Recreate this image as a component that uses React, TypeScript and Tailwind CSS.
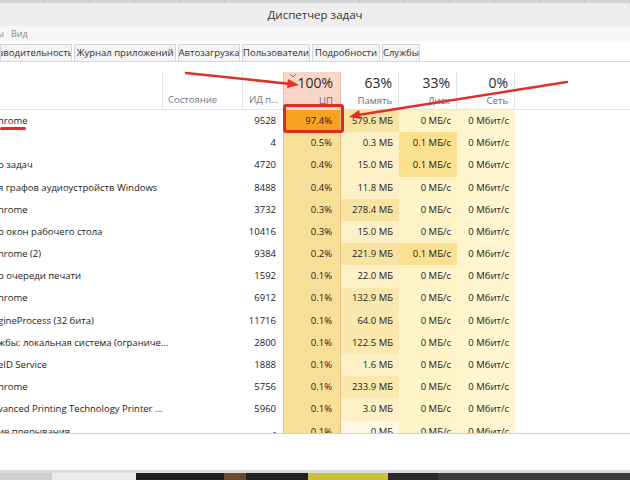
import React from "react";

type Row = {
  name: string;
  pid: string;
  cpu: string;
  mem: string;
  disk: string;
  memTone: "hi" | "mid" | "lo" | "none";
  diskHi?: boolean;
};

const rows: Row[] = [
  { name: "hrome", pid: "9528", cpu: "97.4%", mem: "579.6 МБ", disk: "0 МБ/с", memTone: "hi" },
  { name: "", pid: "4", cpu: "0.5%", mem: "0.3 МБ", disk: "0.1 МБ/с", memTone: "lo", diskHi: true },
  { name: "р задач", pid: "4720", cpu: "0.4%", mem: "15.0 МБ", disk: "0.1 МБ/с", memTone: "lo", diskHi: true },
  { name: "я графов аудиоустройств Windows", pid: "8488", cpu: "0.4%", mem: "11.8 МБ", disk: "0 МБ/с", memTone: "lo" },
  { name: "hrome", pid: "3732", cpu: "0.3%", mem: "278.4 МБ", disk: "0 МБ/с", memTone: "hi" },
  { name: "р окон рабочего стола", pid: "10416", cpu: "0.3%", mem: "15.0 МБ", disk: "0 МБ/с", memTone: "lo" },
  { name: "hrome (2)", pid: "9384", cpu: "0.2%", mem: "221.9 МБ", disk: "0.1 МБ/с", memTone: "hi", diskHi: true },
  { name: "р очереди печати", pid: "1592", cpu: "0.1%", mem: "22.0 МБ", disk: "0 МБ/с", memTone: "lo" },
  { name: "hrome", pid: "6912", cpu: "0.1%", mem: "132.9 МБ", disk: "0 МБ/с", memTone: "mid" },
  { name: "gineProcess (32 бита)", pid: "11716", cpu: "0.1%", mem: "64.0 МБ", disk: "0 МБ/с", memTone: "mid" },
  { name: "жбы: локальная система (ограниче...", pid: "2800", cpu: "0.1%", mem: "122.5 МБ", disk: "0 МБ/с", memTone: "mid" },
  { name: "eID Service", pid: "1888", cpu: "0.1%", mem: "1.6 МБ", disk: "0 МБ/с", memTone: "lo" },
  { name: "hrome", pid: "5756", cpu: "0.1%", mem: "233.9 МБ", disk: "0 МБ/с", memTone: "mid" },
  { name: "vanced Printing Technology Printer ...", pid: "5960", cpu: "0.1%", mem: "3.0 МБ", disk: "0 МБ/с", memTone: "lo" },
  { name: "ие прерывания", pid: "-", cpu: "0.1%", mem: "0 МБ", disk: "0 МБ/с", memTone: "none" },
];

const tabs = [
  { label: "зводительность", w: "w-[72px]" },
  { label: "Журнал приложений", w: "w-[102px]" },
  { label: "Автозагрузка", w: "w-[62px]" },
  { label: "Пользователи", w: "w-[68px]" },
  { label: "Подробности", w: "w-[68px]" },
  { label: "Службы", w: "w-[38px]" },
];

const memBg = {
  hi: "bg-[#f9e3a0]",
  mid: "bg-[#fae8ac]",
  lo: "bg-[#fdf0c6]",
  none: "bg-[#fff8e2]",
};

function HeadCol({ pct, label, active }: { pct: string; label: string; active?: boolean }) {
  return (
    <div
      className={
        active
          ? "relative w-[58px] h-full flex flex-col items-end pr-[7px] bg-[#fad6c6] border-x border-[#f0b9a3]"
          : "w-[58px] h-full flex flex-col items-end pr-[6px] border-r border-[#e6e6e6]"
      }
    >
      {active && (
        <svg className="absolute left-[5px] top-[1px]" width="8" height="5" viewBox="0 0 8 5">
          <path d="M1 1 L4 4 L7 1" fill="none" stroke="#777" strokeWidth="1" />
        </svg>
      )}
      <div className="text-[14px] leading-[18px] mt-[2px] text-[#2a2a2a]">{pct}</div>
      <div className="text-[9.5px] leading-[14px] mt-[2px] text-[#5b6f8c]">{label}</div>
    </div>
  );
}

export default function App() {
  return (
    <div
      className="relative w-[630px] h-[480px] overflow-hidden bg-white text-[#222]"
      style={{ fontFamily: '"Open Sans", "Noto Sans", sans-serif' }}
    >
      {/* top strip */}
      <div className="h-[3px] bg-[#d4d4d4] flex">
        {Array.from({ length: 14 }).map((_, i) => (
          <div key={i} className="flex-1 border-r border-[#c4c4c4]" />
        ))}
      </div>

      {/* title bar */}
      <div className="h-[23px] bg-[#eeeeee] flex items-center justify-center text-[11.5px] text-[#333]">
        Диспетчер задач
      </div>

      {/* menu */}
      <div className="h-[16px] bg-[#f7f7f7] flex items-center gap-[7px] text-[9px] text-[#8a8a8a] -ml-[3px]">
        <span>ы</span>
        <span>Вид</span>
      </div>

      {/* tabs */}
      <div className="h-[20px] flex items-end gap-[2px] border-b border-[#d9d9d9] bg-white pt-[2px]">
        {tabs.map((t) => (
          <div
            key={t.label}
            className={`${t.w} h-full flex items-center justify-center border border-b-0 border-[#d3d3d3] bg-[#f4f4f4] text-[9.5px] text-[#333] whitespace-nowrap overflow-hidden`}
          >
            {t.label}
          </div>
        ))}
      </div>

      {/* column header */}
      <div className="h-[48px] pt-[10px] flex border-b border-[#e3e3e3]">
        <div className="w-[163px] h-full border-r border-[#e6e6e6]" />
        <div className="w-[80px] h-full border-r border-[#e6e6e6] flex items-end pb-[2px] pl-[5px] text-[9.5px] text-[#6b7a8f]">
          Состояние
        </div>
        <div className="w-[40px] h-full flex items-end pb-[2px] pl-[6px] text-[9.5px] text-[#6b7a8f]">
          ИД п...
        </div>
        <HeadCol pct="100%" label="ЦП" active />
        <HeadCol pct="63%" label="Память" />
        <HeadCol pct="33%" label="Диск" />
        <HeadCol pct="0%" label="Сеть" />
      </div>

      {/* rows */}
      <div className="h-[324px] overflow-hidden border-b border-[#cfcfcf] text-[9.5px]">
        {rows.map((r, i) => (
          <div key={i} className="h-[22.2px] flex items-center">
            <div className="w-[243px] h-full flex items-center -ml-[2px] whitespace-nowrap overflow-hidden">
              {r.name}
            </div>
            <div className="w-[42px] h-full flex items-center justify-end pr-[7px]">{r.pid}</div>
            <div
              className={`w-[58px] h-full flex items-center justify-end pr-[8px] border-x border-[#e8bf80] ${
                i === 0 ? "bg-[#f5a321]" : "bg-[#f8df98]"
              }`}
            >
              {r.cpu}
            </div>
            <div className={`w-[58px] h-full flex items-center justify-end pr-[6px] ${memBg[r.memTone]}`}>
              {r.mem}
            </div>
            <div
              className={`w-[58px] h-full flex items-center justify-end pr-[6px] ${
                r.diskHi ? "bg-[#fbe08f]" : "bg-[#fff3c8]"
              }`}
            >
              {r.disk}
            </div>
            <div className="w-[58px] h-full flex items-center justify-end pr-[6px] bg-[#fff5cf]">
              0 Мбит/с
            </div>
          </div>
        ))}
      </div>

      {/* empty area */}
      <div className="h-[36px] bg-white" />

      {/* bottom edge of window and the picture below */}
      <div className="h-[3px] bg-[#dcdcdc]" />
      <div className="h-[7px] flex">
        <div className="w-[52px] bg-[#cfcfcf]" />
        <div className="w-[84px] bg-[#ececec]" />
        <div className="w-[88px] bg-[#1e1e1e]" />
        <div className="w-[22px] bg-[#6b4b2e]" />
        <div className="w-[62px] bg-[#222]" />
        <div className="w-[80px] bg-[#c9c23a]" />
        <div className="w-[50px] bg-[#2a2a2a]" />
        <div className="flex-1 bg-[#3a3a3a]" />
      </div>

      {/* annotations */}
      <div className="absolute left-0 top-[127px] w-[26px] h-[3px] bg-[#de2a24] rounded-full" />
      <div className="absolute left-[283px] top-[104px] w-[61px] h-[29px] border-[3px] border-[#dd2b24] rounded-[3px]" />
      <svg className="absolute left-0 top-0 pointer-events-none" width="630" height="480">
        <line x1="186" y1="73" x2="291" y2="84" stroke="#e0302a" strokeWidth="2.5" strokeLinecap="round" />
        <polygon points="299,85 288,79 287,88" fill="#e0302a" />
        <line x1="567" y1="82" x2="358" y2="115" stroke="#e0302a" strokeWidth="2.5" strokeLinecap="round" />
        <polygon points="349,117 359,110 361,119" fill="#e0302a" />
      </svg>
    </div>
  );
}
